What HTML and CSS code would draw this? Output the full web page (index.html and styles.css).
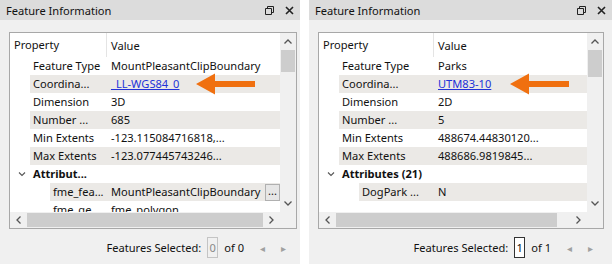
FILE: index.html
```html
<!DOCTYPE html>
<html lang="en">
<head>
<meta charset="UTF-8">
<title>Feature Information</title>
<link rel="stylesheet" href="styles.css">
</head>
<body>
<div class="desk">

    <section class="panel panel-a">
        <header class="title">
            <span>Feature Information</span>
            <span class="tools">
                <svg width="9" height="9" viewBox="0 0 9 9"><path d="M2.5 2.5V0.5h6v6h-2M0.5 2.5h6v6h-6z" fill="none" stroke="#222" stroke-width="1"/></svg>
                <svg width="9" height="9" viewBox="0 0 9 9"><path d="M1 1l7 7M8 1l-7 7" stroke="#222" stroke-width="1.6"/></svg>
            </span>
        </header>
        <div class="tree">
            <div class="view">
                <div class="head"><div class="h-prop">Property</div><div class="h-val">Value</div></div>
                <div class="rows">
                    <div class="row l1"><span class="k">Feature Type</span><span class="v">MountPleasantClipBoundary</span></div>
                    <div class="row l1 alt"><span class="k">Coordina...</span><span class="v"><a class="link">_LL-WGS84_0</a></span>
                        <svg class="pointer" width="60" height="22" viewBox="0 0 60 22"><path d="M0 11L19 0.5V8H59V14H19V21.5Z" fill="#f07010"/></svg>
                    </div>
                    <div class="row l1"><span class="k">Dimension</span><span class="v">3D</span></div>
                    <div class="row l1 alt"><span class="k">Number ...</span><span class="v">685</span></div>
                    <div class="row l1"><span class="k">Min Extents</span><span class="v">-123.115084716818,...</span></div>
                    <div class="row l1 alt"><span class="k">Max Extents</span><span class="v">-123.077445743246...</span></div>
                    <div class="row group">
                        <svg class="twisty" width="7" height="5" viewBox="0 0 7 5"><path d="M0.5 0.5l3 3 3-3" fill="none" stroke="#555" stroke-width="1.1"/></svg>
                        <span class="k">Attribut...</span>
                    </div>
                    <div class="row l2 alt"><span class="k">fme_fea...</span><span class="v">MountPleasantClipBoundary</span><span class="more">...</span></div>
                    <div class="row l2"><span class="k">fme_ge...</span><span class="v">fme_polygon</span></div>
                </div>
            </div>
            <div class="vscroll">
                <div class="arrow"><svg width="8" height="5" viewBox="0 0 8 5"><path d="M0.5 4.5l3.5-3.5 3.5 3.5" fill="none" stroke="#555" stroke-width="1.3"/></svg></div>
                <div class="vthumb thumb-a"></div>
                <div class="track"></div>
                <div class="arrow"><svg width="8" height="5" viewBox="0 0 8 5"><path d="M0.5 0.5l3.5 3.5 3.5-3.5" fill="none" stroke="#555" stroke-width="1.3"/></svg></div>
            </div>
            <div class="hscroll">
                <div class="arrow"><svg width="5" height="8" viewBox="0 0 5 8"><path d="M4.5 0.5l-3.5 3.5 3.5 3.5" fill="none" stroke="#555" stroke-width="1.3"/></svg></div>
                <div class="hthumb" style="width: 236px"></div>
                <div class="track"></div>
                <div class="arrow"><svg width="5" height="8" viewBox="0 0 5 8"><path d="M0.5 0.5l3.5 3.5-3.5 3.5" fill="none" stroke="#555" stroke-width="1.3"/></svg></div>
            </div>
            <div class="corner"></div>
        </div>
        <footer class="status">
            <span>Features Selected:</span>
            <span class="count off">0</span>
            <span>of 0</span>
            <span class="nav">&#9666;</span>
            <span class="nav">&#9656;</span>
        </footer>
    </section>

    <section class="panel panel-b">
        <header class="title">
            <span>Feature Information</span>
            <span class="tools">
                <svg width="9" height="9" viewBox="0 0 9 9"><path d="M2.5 2.5V0.5h6v6h-2M0.5 2.5h6v6h-6z" fill="none" stroke="#222" stroke-width="1"/></svg>
                <svg width="9" height="9" viewBox="0 0 9 9"><path d="M1 1l7 7M8 1l-7 7" stroke="#222" stroke-width="1.6"/></svg>
            </span>
        </header>
        <div class="tree">
            <div class="view">
                <div class="head"><div class="h-prop">Property</div><div class="h-val">Value</div></div>
                <div class="rows">
                    <div class="row l1"><span class="k">Feature Type</span><span class="v">Parks</span></div>
                    <div class="row l1 alt"><span class="k">Coordina...</span><span class="v"><a class="link">UTM83-10</a></span>
                        <svg class="pointer" width="60" height="22" viewBox="0 0 60 22"><path d="M0 11L19 0.5V8H59V14H19V21.5Z" fill="#f07010"/></svg>
                    </div>
                    <div class="row l1"><span class="k">Dimension</span><span class="v">2D</span></div>
                    <div class="row l1 alt"><span class="k">Number ...</span><span class="v">5</span></div>
                    <div class="row l1"><span class="k">Min Extents</span><span class="v">488674.44830120...</span></div>
                    <div class="row l1 alt"><span class="k">Max Extents</span><span class="v">488686.9819845...</span></div>
                    <div class="row group">
                        <svg class="twisty" width="7" height="5" viewBox="0 0 7 5"><path d="M0.5 0.5l3 3 3-3" fill="none" stroke="#555" stroke-width="1.1"/></svg>
                        <span class="k">Attributes (21)</span>
                    </div>
                    <div class="row l2 alt"><span class="k">DogPark ...</span><span class="v">N</span></div>
                </div>
            </div>
            <div class="vscroll">
                <div class="arrow"><svg width="8" height="5" viewBox="0 0 8 5"><path d="M0.5 4.5l3.5-3.5 3.5 3.5" fill="none" stroke="#555" stroke-width="1.3"/></svg></div>
                <div class="vthumb thumb-b"></div>
                <div class="track"></div>
                <div class="arrow"><svg width="8" height="5" viewBox="0 0 8 5"><path d="M0.5 0.5l3.5 3.5 3.5-3.5" fill="none" stroke="#555" stroke-width="1.3"/></svg></div>
            </div>
            <div class="hscroll">
                <div class="arrow"><svg width="5" height="8" viewBox="0 0 5 8"><path d="M4.5 0.5l-3.5 3.5 3.5 3.5" fill="none" stroke="#555" stroke-width="1.3"/></svg></div>
                <div class="hthumb" style="width: 221px"></div>
                <div class="track"></div>
                <div class="arrow"><svg width="5" height="8" viewBox="0 0 5 8"><path d="M0.5 0.5l3.5 3.5-3.5 3.5" fill="none" stroke="#555" stroke-width="1.3"/></svg></div>
            </div>
            <div class="corner"></div>
        </div>
        <footer class="status">
            <span>Features Selected:</span>
            <span class="count">1</span>
            <span>of 1</span>
            <span class="nav">&#9666;</span>
            <span class="nav">&#9656;</span>
        </footer>
    </section>

</div>
</body>
</html>
```

FILE: styles.css
```css
body {
    margin: 0;
    background: #fff;
    font-family: 'Noto Sans', 'Liberation Sans', sans-serif;
    font-size: 11.1px;
    color: #111;
}
.desk {
    display: flex;
    gap: 9px;
    height: 264px;
}
.panel {
    background: #f0f0f0;
    display: flex;
    flex-direction: column;
}
.panel-a {
    width: 300px;
    --key: 97px;
}
.panel-b {
    width: 303px;
    --key: 115px;
}
.title {
    height: 20px;
    background: #dcdcdc;
    display: flex;
    align-items: center;
    justify-content: space-between;
    padding: 0 6px;
    font-size: 11.1px;
}
.tools {
    display: flex;
    gap: 11px;
    align-items: center;
}
.tree {
    margin: 12px 3px 0 9px;
    height: 195px;
    border: 1px solid #a8a8a8;
    background: #fff;
    display: grid;
    grid-template-columns: 1fr 16px;
    grid-template-rows: 1fr 16px;
    overflow: hidden;
}
.panel-b .tree {
    margin-right: 8px;
}
.view {
    overflow: hidden;
    position: relative;
}
.head {
    display: flex;
    height: 24px;
    align-items: center;
}
.h-prop {
    width: var(--key);
    padding-left: 4px;
    box-sizing: border-box;
    border-right: 1px solid #e4e4e4;
    height: 24px;
    line-height: 24px;
}
.h-val {
    padding-left: 4px;
}
.row {
    position: relative;
    height: 18px;
    line-height: 18px;
    display: flex;
    white-space: nowrap;
}
.row .k {
    padding-left: 3px;
    box-sizing: border-box;
}
.row .v {
    padding-left: 4px;
}
.l1 {
    margin-left: 20px;
}
.l1 .k {
    width: calc(var(--key) - 20px);
}
.l2 {
    margin-left: 40px;
}
.l2 .k {
    width: calc(var(--key) - 40px);
}
.alt {
    background: #ebe9e6;
}
.group {
    align-items: center;
}
.group .twisty {
    margin-left: 4px;
    width: 16px;
}
.group .k {
    font-weight: bold;
    padding-left: 3px;
}
.link {
    color: #2232d8;
    text-decoration: underline;
}
.pointer {
    position: absolute;
    top: -2px;
}
.panel-a .pointer {
    left: 166px;
}
.panel-b .pointer {
    left: 171px;
}
.more {
    margin-left: auto;
    width: 13px;
    height: 15px;
    margin-top: 1px;
    line-height: 11px;
    text-align: center;
    border: 1px solid #b0b0b0;
    background: #e6e6e6;
    font-size: 11px;
}
.vscroll {
    grid-row: 1;
    grid-column: 2;
    background: #f0f0f0;
    display: flex;
    flex-direction: column;
}
.vscroll .arrow {
    height: 17px;
    display: flex;
    align-items: center;
    justify-content: center;
}
.vthumb {
    background: #cdcdcd;
    margin: 0 1px;
}
.thumb-a {
    height: 22px;
}
.thumb-b {
    height: 27px;
}
.track {
    flex: 1;
}
.hscroll {
    grid-row: 2;
    grid-column: 1;
    background: #f0f0f0;
    display: flex;
}
.hscroll .arrow {
    width: 17px;
    display: flex;
    align-items: center;
    justify-content: center;
}
.hthumb {
    background: #cdcdcd;
    margin: 1px 0;
}
.corner {
    grid-row: 2;
    grid-column: 2;
    background: #f0f0f0;
}
.status {
    display: flex;
    justify-content: flex-end;
    align-items: center;
    gap: 6px;
    margin-top: 8px;
    padding-right: 14px;
    height: 21px;
}
.panel-b .status {
    padding-right: 19px;
}
.count {
    border: 1px solid #333;
    background: #fff;
    width: 9px;
    height: 19px;
    line-height: 19px;
    text-align: center;
}
.count.off {
    border-color: #c4c4c4;
    color: #888;
    background: #f0f0f0;
}
.nav {
    color: #a0a0a0;
    font-size: 10px;
    margin-left: 10px;
}
```
